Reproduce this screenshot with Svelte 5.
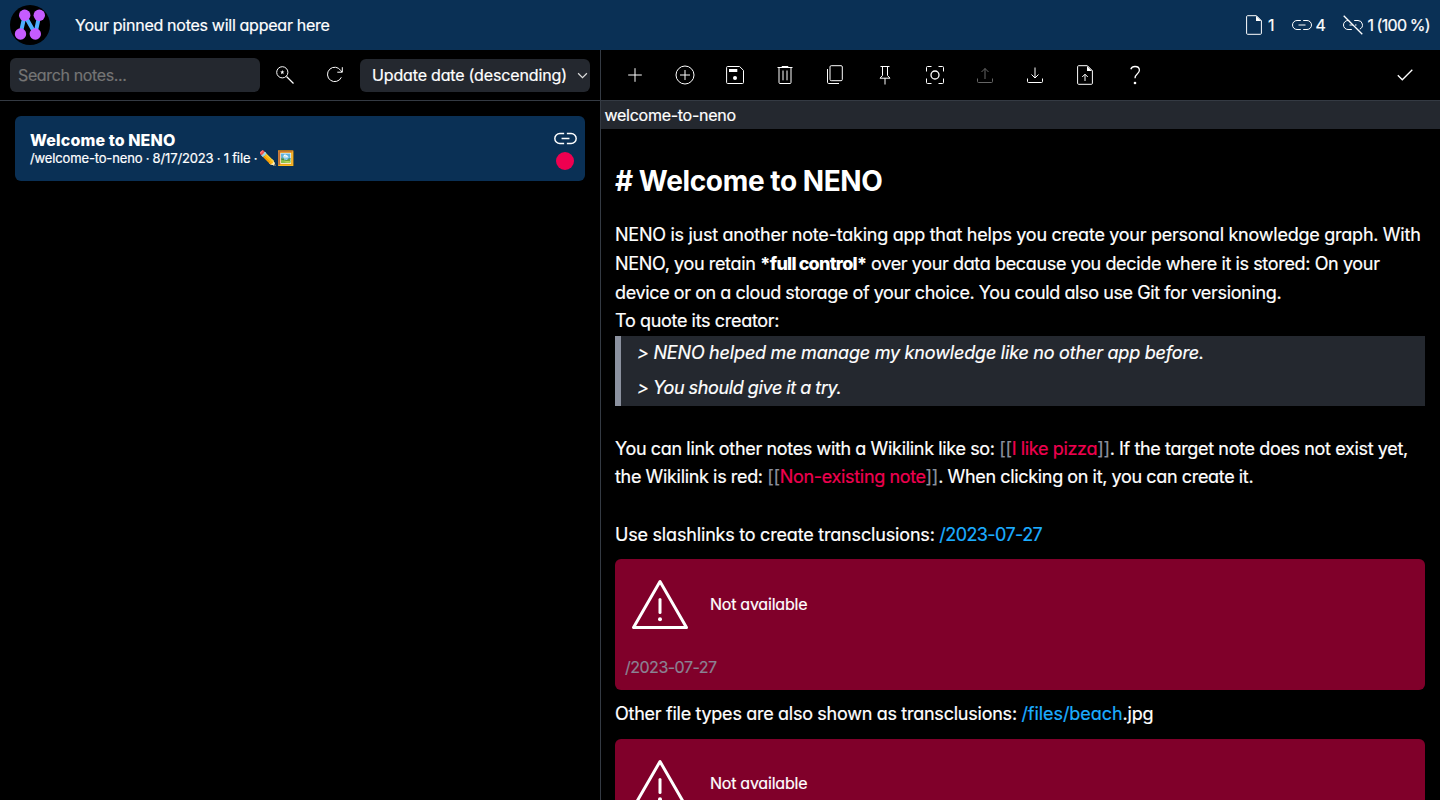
<script>
  const tools = ['plus', 'create', 'save', 'trash', 'copy', 'pin', 'focus', 'upload', 'download', 'fileup', 'help'];
</script>

{#snippet glyph(name)}
  {#if name === 'plus'}
    <path d="M12 5.2v13.6M5.2 12h13.6" />
  {:else if name === 'create'}
    <circle cx="12" cy="12" r="9" /><path d="M12 7v10M7 12h10" />
  {:else if name === 'save'}
    <path d="M4.6 3.5h12l3.9 3.9v12.1q0 1-1 1H4.6q-1 0-1-1V4.5q0-1 1-1Z" />
    <path class="solid" d="M6 6h8.3v3H6z" /><circle class="solid" cx="12" cy="15" r="2" />
  {:else if name === 'trash'}
    <path d="M4.5 4.5h15M9 4V3.5h6V4M6 4.5v15q0 1 1 1h10q1 0 1-1v-15M10 7.5v9.8M14 7.5v9.8" />
  {:else if name === 'copy'}
    <rect x="7" y="2.7" width="12.3" height="15" rx="1.2" /><path d="M4.5 6v13.3q0 1.2 1.2 1.2H16" />
  {:else if name === 'pin'}
    <path d="M7.5 3.5h9M9.5 3.5v9L7 15.2h10l-2.5-2.7v-9M12 15.2v6.3" />
  {:else if name === 'focus'}
    <path d="M3.5 8.5v-4q0-1 1-1h4M15.5 3.5h4q1 0 1 1v4M20.5 15.5v4q0 1-1 1h-4M8.5 20.5h-4q-1 0-1-1v-4" /><circle class="mid" cx="12" cy="12" r="4" />
  {:else if name === 'upload'}
    <path d="M12 16V5.5M8.5 9 12 5.5 15.5 9M4.5 15.5v3q0 1 1 1h13q1 0 1-1v-3" />
  {:else if name === 'download'}
    <path d="M12 4.5V15M8.5 11.5 12 15l3.5-3.5M4.5 15.5v3q0 1 1 1h13q1 0 1-1v-3" />
  {:else if name === 'fileup'}
    <path d="M5.6 2.7h8.8l5 5v12.6q0 1-1 1H5.6q-1 0-1-1V3.7q0-1 1-1ZM12 18v-6.5M9.2 14l2.8-2.8 2.8 2.8" /><path class="solid" d="M14 3v5h5z" />
  {:else if name === 'help'}
    <path class="mid" d="M7.8 6.3C8.5 4.3 10 3.5 12 3.5c2.6 0 4.4 1.5 4.4 3.8 0 1.7-.9 2.6-2.2 3.7-1.5 1.3-2.2 2.1-2.2 4.2" /><circle class="solid" cx="12" cy="20" r="1.3" />
  {:else if name === 'check'}
    <path class="mid" d="m4.8 12.3 4.5 4.5L19.3 6.7" />
  {:else if name === 'search'}
    <circle cx="9.3" cy="9.3" r="5.6" /><path class="mid" d="m13.5 13.5 7 7" /><path class="solid" d="m9.3 7 .6 1.5 1.5.1-1.2 1 .4 1.6-1.3-.9-1.3.9.4-1.6-1.2-1 1.5-.1Z" />
  {:else if name === 'refresh'}
    <path d="M18.3 14.3A7.2 7.2 0 1 1 17.8 7.6l1.2 1.5M19.3 4.2v5h-5" />
  {:else if name === 'file'}
    <path d="M5.6 2.7h8.8l5 5v12.6q0 1-1 1H5.6q-1 0-1-1V3.7q0-1 1-1Z" /><path class="solid" d="M14 2.7v5.3h5.3z" />
  {:else if name === 'link'}
    <path d="M10.8 7.5H7a4.5 4.5 0 0 0 0 9h3.8M13.2 7.5H17a4.5 4.5 0 0 1 0 9h-3.8M8.5 12h7" />
  {:else if name === 'unlink'}
    <path d="M8.2 7.5H7a4.5 4.5 0 0 0 0 9h3.8M13.2 7.5H17a4.5 4.5 0 0 1 1.8 8.6M8.5 12h3.5M14 12h1.5" /><path class="mid" d="m2.7 2.8 18.6 18.4" />
  {/if}
{/snippet}

{#snippet icon(name, cls = '')}
  <svg class="icon {cls}" viewBox="0 0 24 24" aria-hidden="true">{@render glyph(name)}</svg>
{/snippet}

{#snippet missing(path)}
  <div class="missing">
    <div class="notice">
      <svg class="warning" viewBox="0 0 60 60" aria-hidden="true">
        <path d="M30 7.5 3.5 53.4h53Z" /><path d="M30 25.5v13" /><circle cx="30" cy="45.2" r="2" />
      </svg>
      <span>Not available</span>
    </div>
    <div class="path">{path}</div>
  </div>
{/snippet}

<div class="app">
  <header>
    <svg class="logo" viewBox="0 0 40 40" aria-hidden="true">
      <circle cx="20" cy="20" r="20" fill="#000" />
      <path d="M10.5 29 14.7 10.3 25.3 29 29.3 10.3" fill="none" stroke="#4fadff" stroke-width="4" />
      <g fill="#c65cff"><circle cx="14.7" cy="10.3" r="5.7" /><circle cx="29.3" cy="10.3" r="5.7" /><circle cx="10.5" cy="29" r="5.7" /><circle cx="25.3" cy="29" r="5.7" /></g>
    </svg>
    <span class="pinned">Your pinned notes will appear here</span>
    <div class="stats">
      <span class="stat">{@render icon('file')}<b>1</b></span>
      <span class="stat">{@render icon('link')}<b>4</b></span>
      <span class="stat tight">{@render icon('unlink')}<b>1 (100 %)</b></span>
    </div>
  </header>

  <main>
    <section class="list">
      <div class="controls">
        <input placeholder="Search notes..." />
        <button aria-label="Advanced search">{@render icon('search')}</button>
        <button aria-label="Refresh">{@render icon('refresh')}</button>
        <div class="select">
          <span>Update date (descending)</span>
          <svg viewBox="0 0 10 6" aria-hidden="true"><path d="m1 1 4 4 4-4" /></svg>
        </div>
      </div>
      <article>
        <div class="info">
          <h2>Welcome to NENO</h2>
          <p><span>/welcome-to-neno · 8/17/2023 · 1 file · </span><span class="emoji">✏️🖼️</span></p>
        </div>
        <div class="marks">{@render icon('link', 'big')}<i></i></div>
      </article>
    </section>

    <section class="note">
      <div class="toolbar">
        {#each tools as t}
          <button class:off={t === 'upload'} aria-label={t}>{@render icon(t)}</button>
        {/each}
        <button class="last" aria-label="saved">{@render icon('check')}</button>
      </div>
      <div class="slug"><span>welcome-to-neno</span></div>
      <div class="editor">
        <h1># Welcome to NENO</h1>
        <p><span class="l1">NENO is just another note-taking app that helps you create your personal knowledge graph. With</span></p>
        <p><span class="l2">NENO, you retain <strong>*full control*</strong> over your data because you decide where it is stored: On your</span></p>
        <p><span class="l3">device or on a cloud storage of your choice. You could also use Git for versioning.</span></p>
        <p><span class="l4">To quote its creator:</span></p>
        <blockquote>
          <div><span class="q1">&gt; NENO helped me manage my knowledge like no other app before.</span></div>
          <div><span class="q2">&gt; You should give it a try.</span></div>
        </blockquote>
        <p class="gap"><span class="l5">You can link other notes with a Wikilink like so: <em>[[</em><a href="#pizza">I like pizza</a><em>]]</em>. If the target note does not exist yet,</span></p>
        <p><span class="l6">the Wikilink is red: <em>[[</em><a href="#new">Non-existing note</a><em>]]</em>. When clicking on it, you can create it.</span></p>
        <p class="gap"><span class="l7">Use slashlinks to create transclusions: <a class="slash" href="#day">/2023-07-27</a></span></p>
        {@render missing('/2023-07-27')}
        <p><span class="l8">Other file types are also shown as transclusions: <a class="slash" href="#beach">/files/beach</a>.jpg</span></p>
        {@render missing('')}
      </div>
    </section>
  </main>
</div>

<style>
  :global(body) { background: #000; overflow: hidden; }
  * { box-sizing: border-box; }
  .app { height: 800px; display: flex; flex-direction: column; overflow: hidden; background: #000; color: #fff; font: 400 16px/1.2 Inter, sans-serif; font-feature-settings: 'cv11'; word-spacing: -.3px; white-space: nowrap; -webkit-text-stroke: .2px currentColor; }
  header { flex: none; height: 50px; background: #0a3055; display: flex; align-items: center; padding: 0 10px; }
  .logo { width: 40px; height: 40px; margin-right: 25px; }
  .pinned { padding-top: 2px; letter-spacing: -.23px; }
  .stats { margin-left: auto; display: flex; gap: 15px; }
  .stat { display: flex; align-items: center; gap: 2px; }
  .stat b { font-weight: 400; padding-top: 2px; }
  .tight { gap: 2.5px; letter-spacing: -.6px; word-spacing: -.8px; }
  .icon { display: block; width: 24px; height: 24px; flex: none; fill: none; stroke: #fff; stroke-width: 1; }
  .icon .mid { stroke-width: 1.3; }
  .icon .solid { fill: #fff; stroke: none; }
  .big { width: 27px; height: 27px; stroke-width: 1.3; }
  main { flex: 1; display: grid; grid-template-columns: 600px 1fr; min-height: 0; }
  .controls { height: 51px; border-bottom: 1px solid #343a43; display: flex; align-items: center; padding-left: 10px; }
  input { width: 250px; height: 34px; border: 0; border-radius: 6px; background: #24282f; padding: 0 8px; font: inherit; font-feature-settings: inherit; letter-spacing: -.37px; color: #fff; }
  input::placeholder { color: #757575; }
  button { width: 50px; height: 50px; padding: 0; border: 0; background: none; display: grid; place-items: center; }
  .off { opacity: .4; }
  .select { width: 230px; height: 33px; border-radius: 6px; background: #24282f; display: flex; align-items: center; justify-content: space-between; padding: 1px 2px 0 12px; letter-spacing: -.13px; }
  .select svg { width: 11px; height: 7px; fill: none; stroke: #ddd; stroke-width: 1.1; }
  article { margin: 15px; height: 65px; border-radius: 6px; background: #0a3055; display: flex; justify-content: space-between; padding: 0 6.5px 0 15px; }
  .info { padding-top: 14px; }
  h2 { margin: 0; font-size: 16px; line-height: 20px; font-weight: 800; letter-spacing: .16px; }
  .info p { margin: 0; font-size: 13px; line-height: 17px; display: flex; white-space: pre; letter-spacing: -.14px; word-spacing: -.2px; }
  .emoji { font-family: "Noto Color Emoji", sans-serif; font-size: 14px; letter-spacing: 0; margin-left: 2.5px; }
  .marks { display: flex; flex-direction: column; align-items: center; padding-top: 8.5px; }
  .marks i { width: 18px; height: 18px; border-radius: 50%; background: #ef0050; }
  .note { border-left: 1px solid #343a43; overflow: hidden; }
  .toolbar { height: 51px; padding-left: 9px; border-bottom: 1px solid #343a43; display: flex; }
  .last { margin-left: auto; margin-right: 10px; }
  .slug { height: 28px; background: #24282f; padding: 0 3.5px; line-height: 28px; letter-spacing: -.27px; }
  .editor { padding: .5px 15px 0 14px; font-size: 18px; line-height: 28.8px; }
  h1 { margin: 0; padding-top: 28.5px; height: 91px; font-size: 28px; line-height: 46px; font-weight: 700; letter-spacing: -.34px; }
  .editor p { margin: 0; height: 28.8px; }
  .editor p span { display: inline-block; padding-top: .5px; }
  .editor p.gap { margin-top: 28.8px; }
  .l1 { letter-spacing: -.21px; }
  .l2 { letter-spacing: -.31px; }
  .l3 { letter-spacing: -.335px; }
  .l4 { letter-spacing: -.29px; }
  .q1 { letter-spacing: -.15px; }
  .q2 { letter-spacing: -.36px; }
  .l5 { letter-spacing: -.3px; }
  .l6 { letter-spacing: -.31px; }
  .l7 { letter-spacing: -.16px; }
  .l7 a { letter-spacing: -.58px; }
  .l8 { letter-spacing: -.23px; }
  .l8 a { letter-spacing: -.05px; }
  strong { font-weight: 800; letter-spacing: -.75px; }
  h1, h2, strong { -webkit-text-stroke: 0; }
  blockquote { margin: 0; border-left: 6px solid #8b919f; background: #24282f; padding-left: 16px; font-style: italic; line-height: 34.8px; }
  blockquote div + div { padding-top: .6px; margin-bottom: -.6px; }
  em { font-style: normal; color: #8b919f; }
  a { color: #ef0050; text-decoration: none; }
  a.slash { color: #1cadff; }
  .missing { height: 130.5px; margin: 10px 0; border-radius: 6px; background: #80002a; font-size: 16px; letter-spacing: -.2px; }
  .notice { height: 90px; display: flex; align-items: center; padding-left: 15px; gap: 20px; }
  .warning { width: 60px; height: 60px; fill: none; stroke: #fff; stroke-width: 3; stroke-linejoin: round; stroke-linecap: round; }
  .warning circle { fill: #fff; stroke: none; }
  .path { padding: 4px 10px; color: #8b8394; letter-spacing: -.5px; }
</style>
